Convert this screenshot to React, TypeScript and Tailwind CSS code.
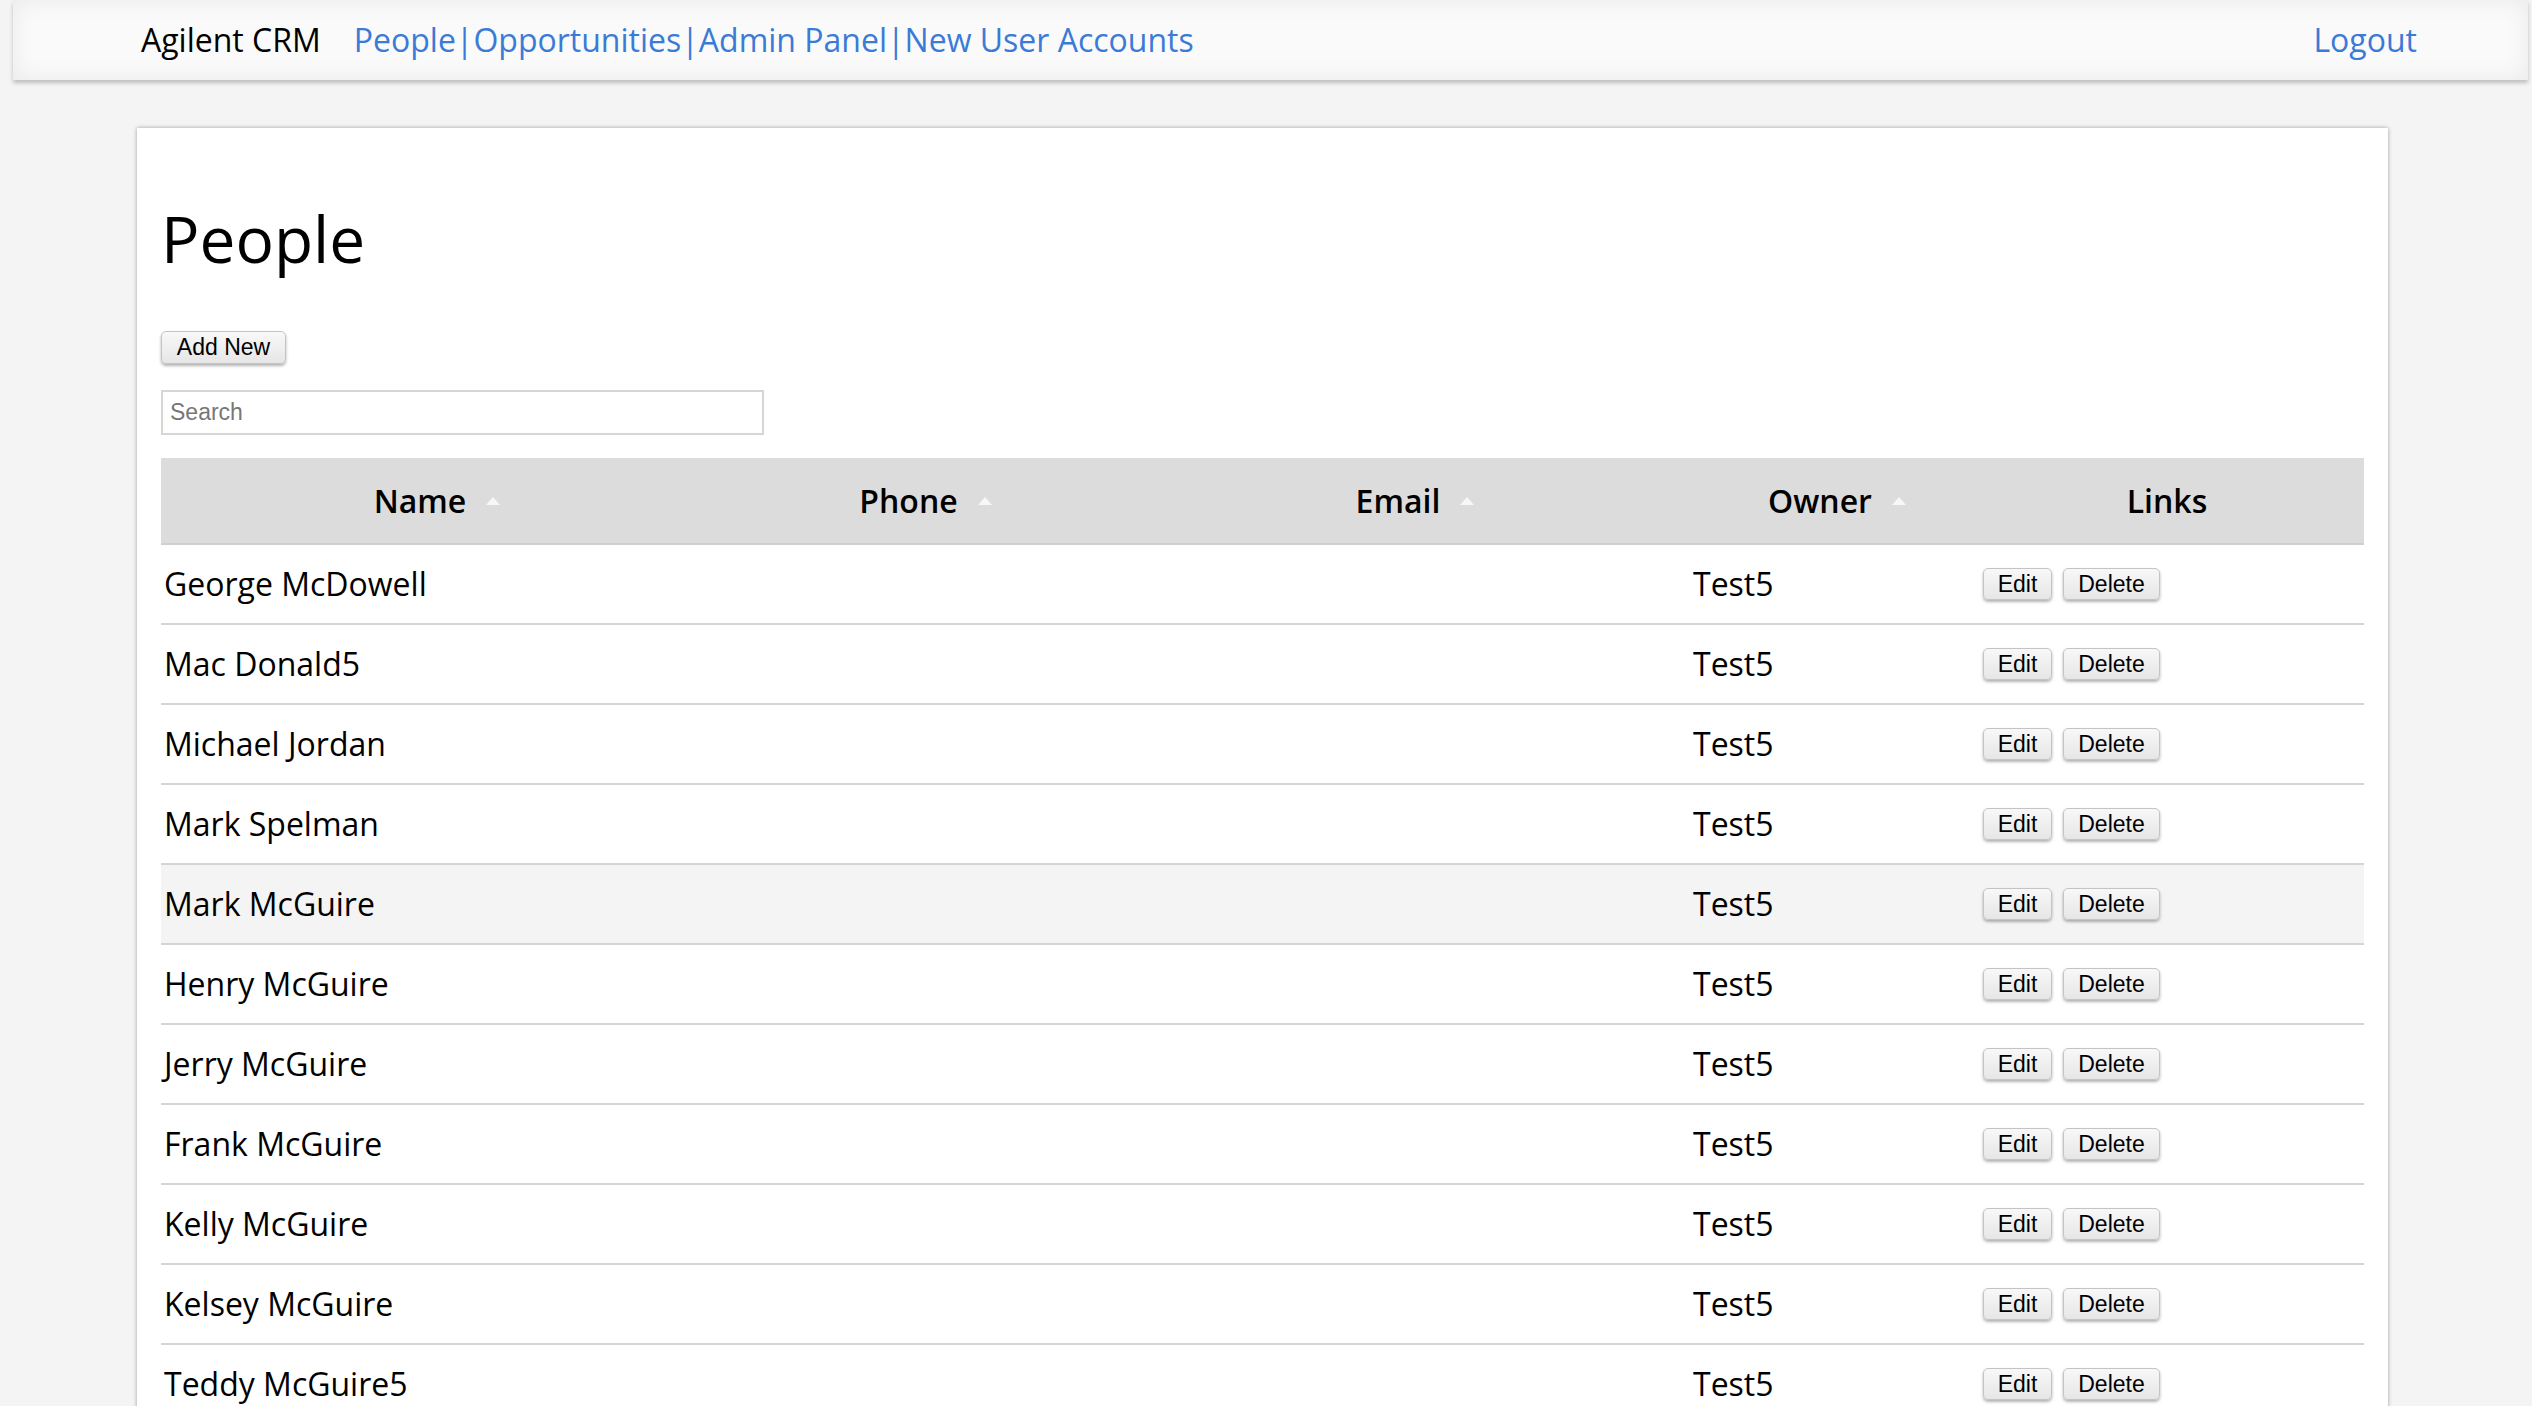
import { Fragment } from 'react';

const people = [
  'George McDowell',
  'Mac Donald5',
  'Michael Jordan',
  'Mark Spelman',
  'Mark McGuire',
  'Henry McGuire',
  'Jerry McGuire',
  'Frank McGuire',
  'Kelly McGuire',
  'Kelsey McGuire',
  'Teddy McGuire5',
];

const navLinks = ['People', 'Opportunities', 'Admin Panel', 'New User Accounts'];

function SortArrow() {
  return (
    <svg className="ml-5 inline-block" width="14" height="8" viewBox="0 0 14 8">
      <path d="M7 0 L14 8 L0 8 Z" fill="#f7f7f7" />
    </svg>
  );
}

function GrayButton({ label, width }: { label: string; width: string }) {
  return (
    <button
      className={`${width} h-[32px] rounded-[5px] border border-[#c4c4c4] bg-gradient-to-b from-[#f8f8f8] to-[#e6e6e6] text-[23px] leading-none text-black shadow-[0_2px_3px_rgba(0,0,0,0.3)]`}
      style={{ fontFamily: '"Liberation Sans", Arial, sans-serif' }}
    >
      {label}
    </button>
  );
}

export default function App() {
  return (
    <div
      className="min-h-[1406px] w-full bg-[#f4f4f4] pr-[4px] text-black"
      style={{ fontFamily: '"Open Sans", "Noto Sans", sans-serif' }}
    >
      {/* Top bar */}
      <div className="ml-[13px] flex h-[80px] items-center justify-between bg-[#fafafa] pl-[128px] pr-[111px] shadow-[inset_0_0_24px_rgba(0,0,0,0.07),0_3px_4px_rgba(0,0,0,0.22)]">
        <div className="flex items-center text-[32px]">
          <span className="mr-[33px]">Agilent CRM</span>
          <div className="flex items-center text-[#3a7bd8]">
            {navLinks.map((l, i) => (
              <Fragment key={l}>
                {i > 0 && <span>|</span>}
                <a href="#" className="hover:underline">{l}</a>
              </Fragment>
            ))}
          </div>
        </div>
        <a href="#" className="text-[32px] text-[#3a7bd8]">Logout</a>
      </div>

      {/* Card */}
      <div className="mt-[48px] ml-[137px] w-[2251px] bg-white px-[24px] pt-[79px] pb-[40px] shadow-[0_0_4px_rgba(0,0,0,0.35)]">
        <h1 className="text-[64px] leading-[64px]">People</h1>

        <div className="mt-[60px]">
          <button
            className="h-[33px] w-[125px] rounded-[5px] border border-[#c4c4c4] bg-gradient-to-b from-[#f8f8f8] to-[#e6e6e6] text-[23px] leading-none shadow-[0_2px_3px_rgba(0,0,0,0.3)]"
            style={{ fontFamily: '"Liberation Sans", Arial, sans-serif' }}
          >
            Add New
          </button>
        </div>

        <input
          placeholder="Search"
          className="mt-[26px] block h-[45px] w-[603px] border-2 border-[#d6d6d6] px-[7px] text-[23px] outline-none placeholder:text-[#777]"
          style={{ fontFamily: '"Liberation Sans", Arial, sans-serif' }}
        />

        <table className="mt-[23px] w-[2203px] table-fixed border-collapse text-[32px]">
          <thead>
            <tr className="h-[86px] border-b-2 border-[#cfcfcf] bg-[#dcdcdc]">
              <th className="w-[552px] font-semibold">
                <span className="inline-flex items-center">Name<SortArrow /></span>
              </th>
              <th className="w-[425px] font-semibold">
                <span className="inline-flex items-center">Phone<SortArrow /></span>
              </th>
              <th className="w-[554px] font-semibold">
                <span className="inline-flex items-center">Email<SortArrow /></span>
              </th>
              <th className="w-[278px] pl-[12px] font-semibold">
                <span className="inline-flex items-center">Owner<SortArrow /></span>
              </th>
              <th className="w-[394px] font-semibold">Links</th>
            </tr>
          </thead>
          <tbody>
            {people.map((p, i) => (
              <tr
                key={p}
                className={`h-[80px] border-b-2 border-[#d4d4d4] ${i === 4 ? 'bg-[#f4f4f4]' : 'bg-white'}`}
              >
                <td className="pl-[3px]">{p}</td>
                <td></td>
                <td></td>
                <td className="pl-[1px]">Test5</td>
                <td className="pl-[13px]">
                  <div className="flex gap-[11px]">
                    <GrayButton label="Edit" width="w-[69px]" />
                    <GrayButton label="Delete" width="w-[97px]" />
                  </div>
                </td>
              </tr>
            ))}
          </tbody>
        </table>
      </div>
    </div>
  );
}
